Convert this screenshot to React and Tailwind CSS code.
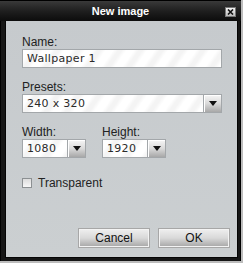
import { useState } from "react"

const stripes =
  "bg-[repeating-linear-gradient(125deg,#ffffff_0px,#ffffff_6px,#f4f4f4_10px,#f4f4f4_13px,#ffffff_17px)]"

const Arrow = () => (
  <svg width="8" height="5" viewBox="0 0 8 5">
    <path d="M0 0H8L4 5Z" fill="#111" />
  </svg>
)

const Select = ({ value, className }) => (
  <div className={`flex h-[19px] border border-[#a3a7aa] ${stripes} ${className}`}>
    <div className="flex-1 pl-[4px] text-[11px] leading-[17px] text-[#2a2a2a] font-['DejaVu_Sans',sans-serif] tracking-[0.3px]">
      {value}
    </div>
    <div className="flex w-[18px] items-center justify-center border-l border-[#a3a7aa] bg-gradient-to-b from-[#f6f6f6] via-[#dadada] to-[#a8a8a8] shadow-[inset_1px_1px_0_#ffffff]">
      <Arrow />
    </div>
  </div>
)

const Label = ({ children }) => (
  <div className="h-[13px] text-[12px] leading-[13px] text-[#222]">{children}</div>
)

const Button = ({ children }) => (
  <button className="h-[18px] w-[70px] border border-[#f3f3f3] bg-gradient-to-b from-[#ededed] via-[#d9d9d9] to-[#ababab] text-[12px] leading-[16px] text-[#111] shadow-[0_0_0_1px_#a7a7a7]">
    {children}
  </button>
)

export default function App() {
  const [transparent, setTransparent] = useState(false)

  return (
    <div className="h-[263px] w-[243px] bg-[#bdbdbd] font-['Liberation_Sans',Arial,sans-serif]">
      <div className="flex h-[261px] w-[241px] flex-col bg-[#161616] shadow-[inset_1px_0_0_#000,inset_-1px_0_0_#000]">
        <div className="relative flex h-[21px] items-center justify-center border-t border-[#000] bg-gradient-to-b from-[#3a3a3a] via-[#1f1f1f] to-[#0c0c0c]">
          <span className="text-[11px] font-bold text-white">New image</span>
          <div className="absolute right-[5px] top-[6px] flex h-[10px] w-[11px] items-center justify-center border border-[#777] bg-gradient-to-b from-[#f4f4f4] to-[#bcbcbc]">
            <svg width="7" height="6" viewBox="0 0 7 6">
              <path d="M1 0.5L6 5.5M6 0.5L1 5.5" stroke="#111" strokeWidth="1.6" />
            </svg>
          </div>
        </div>
        <div className="ml-[6px] mr-[4px] flex h-[236px] flex-col bg-gradient-to-b from-[#c6cacd] to-[#cbcfd1] pl-[16px] pr-[15px] pt-[15px] shadow-[0_0_0_1px_#050505]">
          <Label>Name:</Label>
          <div className={`h-[19px] border border-[#a3a7aa] ${stripes} pl-[4px] text-[11px] leading-[17px] text-[#2a2a2a] font-['DejaVu_Sans',sans-serif] tracking-[0.3px]`}>
            Wallpaper 1
          </div>

          <div className="mt-[13px]">
            <Label>Presets:</Label>
          </div>
          <Select value="240 x 320" />

          <div className="mt-[13px] flex gap-[16px]">
            <div className="flex w-[64px] flex-col">
              <Label>Width:</Label>
              <Select value="1080" />
            </div>
            <div className="flex w-[64px] flex-col">
              <Label>Height:</Label>
              <Select value="1920" />
            </div>
          </div>

          <label className="mt-[18px] flex h-[13px] items-center gap-[6px] text-[12px] text-[#222]">
            <input
              type="checkbox"
              checked={transparent}
              onChange={() => setTransparent(!transparent)}
              className="h-[10px] w-[10px] appearance-none border border-[#8c9092] bg-gradient-to-b from-[#dcdcdc] to-[#f7f7f7]"
            />
            Transparent
          </label>

          <div className="mt-auto mb-[10px] mr-[-7px] flex justify-end gap-[10px]">
            <Button>Cancel</Button>
            <Button>OK</Button>
          </div>
        </div>
      </div>
    </div>
  )
}
